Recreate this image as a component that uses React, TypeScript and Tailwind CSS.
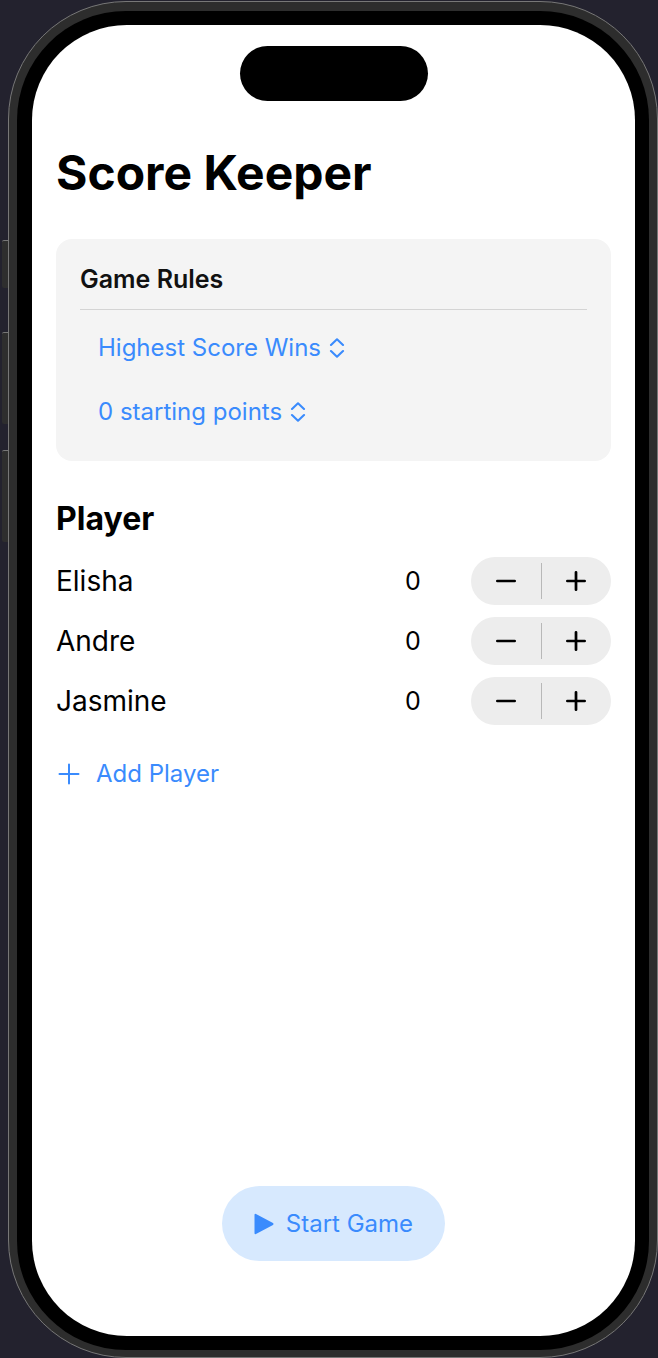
import { useState } from "react";

const initialPlayers = [
  { id: 1, name: "Elisha", score: 0 },
  { id: 2, name: "Andre", score: 0 },
  { id: 3, name: "Jasmine", score: 0 },
];

function ChevronUpDown() {
  return (
    <svg className="pointer-events-none h-5 w-4" viewBox="0 0 16 20" fill="none" stroke="currentColor" strokeWidth="2.1" strokeLinecap="round" strokeLinejoin="round" aria-hidden="true">
      <path d="M2 7 8 1.3 14 7M2 13l6 5.7 6-5.7" />
    </svg>
  );
}

function Plus({ className }: { className: string }) {
  return (
    <svg className={className} viewBox="0 0 22 22" fill="none" stroke="currentColor" strokeLinecap="round" aria-hidden="true">
      <path d="M11 1.5v19M1.5 11h19" />
    </svg>
  );
}

function Minus({ className }: { className: string }) {
  return (
    <svg className={className} viewBox="0 0 22 22" fill="none" stroke="currentColor" strokeLinecap="round" aria-hidden="true">
      <path d="M1.5 11h19" />
    </svg>
  );
}

function PickerRow({ label, options }: { label: string; options: string[] }) {
  return (
    <div className="flex h-16 items-center gap-2 text-[#3a8bfd]">
      <select aria-label={label} className="field-sizing-content cursor-pointer appearance-none bg-transparent text-2xl leading-8 outline-none">
        {options.map((option) => (
          <option key={option}>{option}</option>
        ))}
      </select>
      <ChevronUpDown />
    </div>
  );
}

function Stepper({ name, onStep }: { name: string; onStep: (by: number) => void }) {
  return (
    <div className="flex h-12 w-35 items-center rounded-full bg-[#ededed]">
      <button type="button" aria-label={`Decrease score for ${name}`} className="flex h-full flex-1 items-center justify-center" onClick={() => onStep(-1)}>
        <Minus className="size-5 stroke-3" />
      </button>
      <span className="h-9 w-px bg-[#b8b8b8]" />
      <button type="button" aria-label={`Increase score for ${name}`} className="flex h-full flex-1 items-center justify-center" onClick={() => onStep(1)}>
        <Plus className="size-5 stroke-3" />
      </button>
    </div>
  );
}

export default function App() {
  const [players, setPlayers] = useState(initialPlayers);

  const step = (id: number, by: number) =>
    setPlayers((list) => list.map((p) => (p.id === id ? { ...p, score: p.score + by } : p)));

  const addPlayer = () =>
    setPlayers((list) => [...list, { id: list.length + 1, name: `Player ${list.length + 1}`, score: 0 }]);

  return (
    <div className="relative flex min-h-screen flex-col bg-[#23222e] pt-px pl-2 font-['Inter','Liberation_Sans',sans-serif] text-black">
      <span className="absolute top-60 left-0.5 h-12 w-2 rounded-l-xs border-t border-[#777] bg-[#2e2e2e]" />
      <span className="absolute top-83 left-0.5 h-23 w-2 rounded-l-xs border-t border-[#777] bg-[#2e2e2e]" />
      <span className="absolute top-[450px] left-0.5 h-23 w-2 rounded-l-xs border-t border-[#777] bg-[#2e2e2e]" />

      <div className="relative flex flex-1 flex-col rounded-[118px] border border-[#777] bg-[#2d2d2d] px-2 pt-[9px] pb-[7px]">
        <div className="flex flex-1 flex-col rounded-[109px] bg-black py-3.5 pr-3.5 pl-[15px]">
          <main className="flex flex-1 flex-col rounded-[95px] bg-white px-6 pt-[21px] pb-[75px]">
            <div className="h-[55px] w-47 self-center rounded-full bg-black" />

            <h1 className="mt-10 text-5xl leading-[64px] font-bold">Score Keeper</h1>

            <section className="mt-[34px] rounded-2xl bg-[#f4f4f4] px-6 pt-6 pb-[17px]">
              <h2 className="border-b border-[#d4d4d4] pb-3.5 text-[25px] leading-8 font-semibold text-[#111]">Game Rules</h2>
              <div className="mt-1.5 pl-[18px]">
                <PickerRow label="Winning rule" options={["Highest Score Wins", "Lowest Score Wins"]} />
                <PickerRow label="Starting points" options={["0 starting points", "10 starting points", "20 starting points"]} />
              </div>
            </section>

            <table className="mt-[33px] w-full">
              <thead>
                <tr className="h-[57px]">
                  <th scope="col" className="pb-2 text-left align-middle text-[32px] leading-10 font-bold">Player</th>
                  <td />
                  <td />
                </tr>
              </thead>
              <tbody>
                {players.map((p) => (
                  <tr key={p.id} className="h-15">
                    <th scope="row" className="text-left text-[28px] leading-9 font-normal">{p.name}</th>
                    <td className="w-29 text-center text-[25px] leading-8">{p.score}</td>
                    <td className="w-35">
                      <Stepper name={p.name} onStep={(by) => step(p.id, by)} />
                    </td>
                  </tr>
                ))}
              </tbody>
            </table>

            <button type="button" onClick={addPlayer} className="mt-[27px] ml-0.5 flex items-center gap-4 self-start text-2xl leading-8 text-[#3a8bfd]">
              <Plus className="size-[22px] stroke-2" />
              Add Player
            </button>

            <button type="button" className="mt-auto flex h-[75px] items-center gap-3 self-center rounded-full bg-[#d7e9fe] px-8 text-2xl leading-8 text-[#3a8bfd]">
              <svg className="h-[22px] w-5" viewBox="0 0 20 22" fill="currentColor" stroke="currentColor" strokeWidth="2" strokeLinejoin="round" aria-hidden="true">
                <path d="M1.5 1.8v18.4L18.5 11z" />
              </svg>
              Start Game
            </button>
          </main>
        </div>
      </div>
    </div>
  );
}
